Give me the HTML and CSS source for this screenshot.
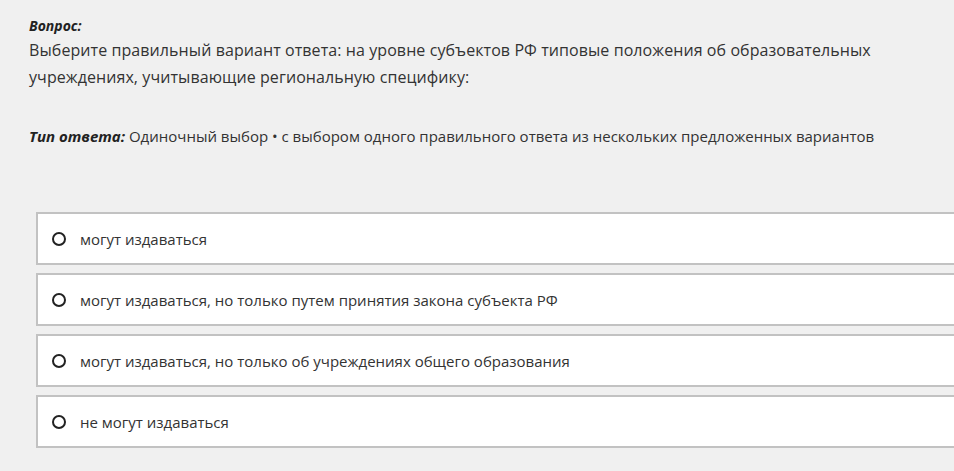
FILE: index.html
```html
<!DOCTYPE html>
<html lang="ru">
<head>
    <meta charset="UTF-8">
    <meta name="viewport" content="width=device-width, initial-scale=1.0">
    <title>Вопрос</title>
    <link rel="stylesheet" href="styles.css">
</head>
<body>
    <main class="quiz">
        <div class="question">
            <div class="question-label">Вопрос:</div>
            <p class="question-text">Выберите правильный вариант ответа: на уровне субъектов РФ типовые положения об образовательных учреждениях, учитывающие региональную специфику:</p>
        </div>

        <p class="answer-type"><b>Тип ответа:</b> Одиночный выбор • с выбором одного правильного ответа из нескольких предложенных вариантов</p>

        <ul class="options">
            <li class="option"><span class="radio"></span>могут издаваться</li>
            <li class="option"><span class="radio"></span>могут издаваться, но только путем принятия закона субъекта РФ</li>
            <li class="option"><span class="radio"></span>могут издаваться, но только об учреждениях общего образования</li>
            <li class="option"><span class="radio"></span>не могут издаваться</li>
        </ul>
    </main>
</body>
</html>
```

FILE: styles.css
```css
* {
    margin: 0;
    padding: 0;
    box-sizing: border-box;
}

body {
    background-color: #f0f0f0;
    color: #333;
    font-family: 'Open Sans', 'Noto Sans', sans-serif;
    overflow: hidden;
}

.quiz {
    padding: 16px 0 0 29px;
    width: 960px;
}

.question-label {
    font-size: 14px;
    font-weight: 700;
    font-style: italic;
    line-height: 20px;
    color: #222;
}

.question-text {
    margin-top: 1px;
    font-size: 16px;
    line-height: 27px;
    letter-spacing: 0.08px;
    width: 900px;
}

.answer-type {
    margin-top: 34px;
    font-size: 15px;
    line-height: 22px;
}

.answer-type b {
    font-style: italic;
    color: #222;
}

.options {
    list-style: none;
    margin: 65px 0 0 7px;
    display: flex;
    flex-direction: column;
    gap: 8px;
}

.option {
    display: flex;
    align-items: center;
    height: 53px;
    padding-left: 14px;
    background: #fff;
    border: 2px solid #c2c2c2;
    border-right: none;
    font-size: 15px;
}

.radio {
    width: 14px;
    height: 14px;
    border: 2.5px solid #222;
    border-radius: 50%;
    margin-right: 14px;
}
```
